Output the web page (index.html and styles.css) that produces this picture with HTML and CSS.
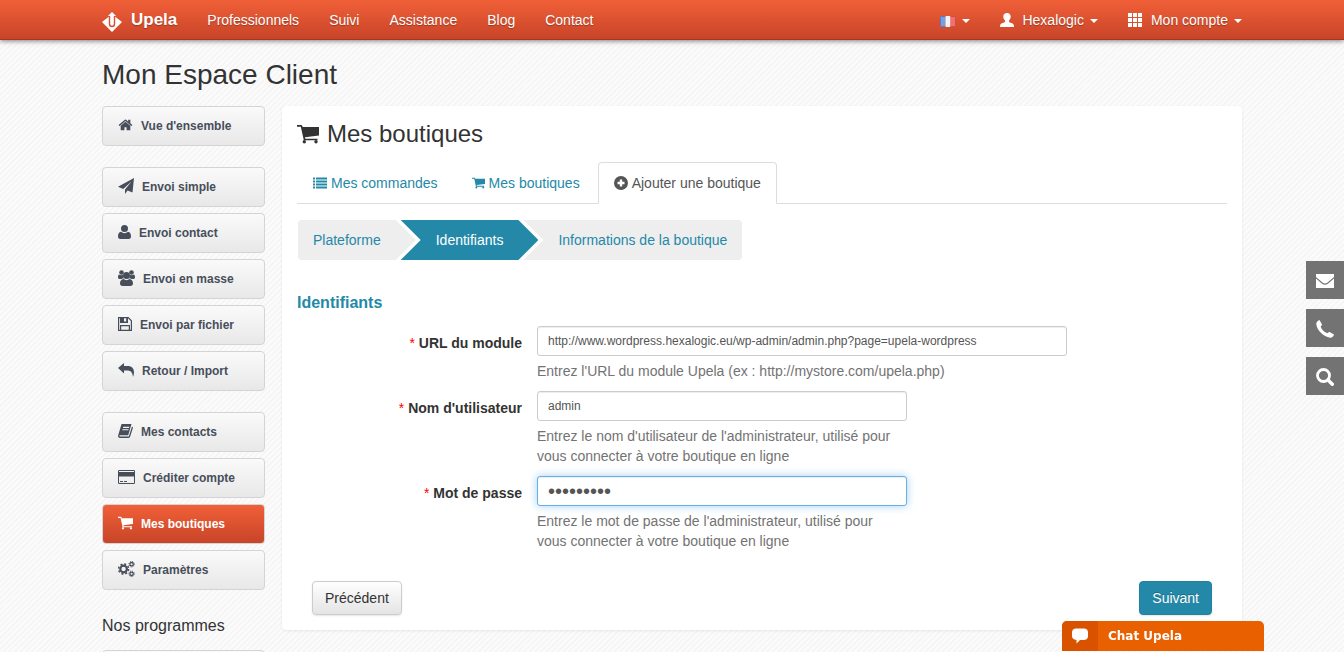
FILE: index.html
```html
<!DOCTYPE html>
<html lang="fr">
<head>
<meta charset="utf-8">
<meta name="viewport" content="width=device-width, initial-scale=1">
<title>Upela - Mes boutiques</title>
<link rel="stylesheet" href="styles.css">
</head>
<body>
<svg class="sprite" aria-hidden="true">
  <symbol id="cart" viewBox="0 0 22 20"><path d="M0 1h4.600l1.200 2H22v8.500L8 13.200l.3 1.600H20.500V16.200H6.800L3.800 2.800H0z"/><circle cx="7.300" cy="17.800" r="1.700"/><circle cx="19" cy="17.800" r="1.700"/></symbol>
  <symbol id="home" viewBox="0 0 1792 1792"><path d="M1472 992v480q0 26-19 45t-45 19h-384v-384h-256v384h-384q-26 0-45-19t-19-45v-480q0-1 .5-3t.5-3l575-474 575 474q1 2 1 6zm223-69l-62 74q-8 9-21 11h-3q-13 0-21-7l-692-577-692 577q-12 8-24 7-13-2-21-11l-62-74q-8-10-7-23.500t11-21.500l719-599q32-26 76-26t76 26l244 204v-195q0-14 9-23t23-9h192q14 0 23 9t9 23v408l219 182q10 8 11 21.500t-7 23.500z"/></symbol>
  <symbol id="plane" viewBox="0 0 16 16"><path d="M16 0l-1.500 14.500-5-2L7 16v-4.500L13.500 3.500 5.200 11 0 8.800z"/></symbol>
  <symbol id="user" viewBox="0 0 13 14"><circle cx="6.500" cy="3.500" r="3.500"/><path d="M3 6.800C.8 7 0 9 0 11.500 0 13 .8 14 2.200 14h8.600c1.400 0 2.200-1 2.200-2.500C13 9 12.200 7 10 6.800 8 8.700 5 8.700 3 6.800z"/></symbol>
  <symbol id="users" viewBox="0 0 17 16"><circle cx="3.500" cy="2.500" r="2.300"/><circle cx="13.500" cy="2.500" r="2.300"/><circle cx="8.500" cy="5.500" r="3.500"/><path d="M1 4.500c1.500 1 3 1 4 .3-.2 1.500.2 2.700 1 3.500C5 8.300 4 8.500 3.300 9H1.500C.3 9 0 8 0 7c0-1 .3-2.200 1-2.500zM16 4.500c-1.500 1-3 1-4 .3.200 1.500-.2 2.700-1 3.500 1 0 2 .2 2.700.7h1.800c1.200 0 1.500-1 1.500-2 0-1-.3-2.200-1-2.500zM5.500 9C3.200 9.500 2 11 2 13.500 2 15 3 16 4.500 16h8c1.500 0 2.500-1 2.500-2.500 0-2.500-1.200-4-3.500-4.500-1.800 1.500-4.200 1.500-6 0z"/></symbol>
  <symbol id="disk" viewBox="0 0 14 14"><path fill-rule="evenodd" d="M0 0h10.500L14 3.500V14H0zm1.200 1.200v11.600H2V8h10v4.800h.8V4L10 1.200V6H2V1.200zM6 1.200v3.300h2.200V1.200zM3.200 9.200v3.600h7.600V9.200z"/></symbol>
  <symbol id="reply" viewBox="0 0 16 14"><path d="M0 5l6-5v3h3.500C14 3 16 5.500 16 9.500c0 1.500-.4 3-1 4.500C14.500 9.500 13 7.500 9 7.500H6v3z"/></symbol>
  <symbol id="book" viewBox="0 0 15 14"><path fill-rule="evenodd" d="M4 0h9.500L10.200 11.200H1.800c-1 .3-.4 1.300.4 1.300h8.600L14 2.500c1 .3 1 1 .8 1.700l-2.700 8.600c-.2.700-.8 1.200-1.600 1.200H2C.7 14-.4 12.600.2 11.200L3.200 1C3.300.500 3.500.1 4 0zm1.300 2.800L5 3.900h6l.3-1.100zM4.600 5.200l-.3 1.100h6l.3-1.100z"/></symbol>
  <symbol id="card" viewBox="0 0 17 14"><path fill-rule="evenodd" d="M1.200 0h14.600Q17 0 17 1.200v11.600q0 1.200-1.200 1.200H1.200Q0 14 0 12.800V1.200Q0 0 1.200 0zM1 1v1h15V1zm0 5.500V13h15V6.500zM2 11h3v1H2zm4 0h3v1H6z"/></symbol>
  <symbol id="cogs" viewBox="0 0 17 16"><g fill="none" stroke="currentColor"><circle cx="5.600" cy="8" r="3.300" stroke-width="2.200"/><circle cx="5.600" cy="8" r="5" stroke-width="1.500" stroke-dasharray="2 1.930"/><circle cx="13.600" cy="3.200" r="1.700" stroke-width="1.300"/><circle cx="13.600" cy="3.200" r="2.700" stroke-width="1" stroke-dasharray="1.100 1.020"/><circle cx="13.600" cy="12.800" r="1.700" stroke-width="1.300"/><circle cx="13.600" cy="12.800" r="2.700" stroke-width="1" stroke-dasharray="1.100 1.020"/></g></symbol>
  <symbol id="list" viewBox="0 0 14 11"><path d="M0 0h2v2H0zM3 0h11v2H3zM0 3h2v2H0zM3 3h11v2H3zM0 6h2v2H0zM3 6h11v2H3zM0 9h2v2H0zM3 9h11v2H3z"/></symbol>
  <symbol id="plus" viewBox="0 0 14 14"><path fill-rule="evenodd" d="M7 0a7 7 0 110 14A7 7 0 017 0zM5.800 3.500v2.300H3.500v2.400h2.300v2.300h2.400V8.200h2.300V5.800H8.200V3.500z"/></symbol>
  <symbol id="person" viewBox="0 0 14 14"><path d="M7 0c2.200 0 3.700 1.400 3.700 3.600 0 1.700-.7 3-1.700 4v1.200c.4 1 3 1.200 4.200 2.200.6.600.8 1.600.8 3H0c0-1.400.2-2.400.8-3C2 10 4.600 9.800 5 8.800V7.600c-1-1-1.700-2.300-1.700-4C3.300 1.400 4.800 0 7 0z"/></symbol>
  <symbol id="grid" viewBox="0 0 14 14"><path d="M0 0h4v4H0zM5 0h4v4H5zM10 0h4v4h-4zM0 5h4v4H0zM5 5h4v4H5zM10 5h4v4h-4zM0 10h4v4H0zM5 10h4v4H5zM10 10h4v4h-4z"/></symbol>
  <symbol id="mail" viewBox="0 0 18 14"><path d="M0 0h18v3L11.500 8.600q-2.500 2-5 0L0 3zM0 4.500l5.800 5.100q3.200 2.400 6.400 0L18 4.500V14H0z"/></symbol>
  <symbol id="phone" viewBox="0 0 18 18"><path d="M3.500 0L6 4.500c.2 1-.9 1.300-1.300 2.200C5.500 9.500 8.500 12.300 11.400 13.200c.8-.5 1.200-1.400 2.200-1.200l4.400 2.500c-.3 2-2 3.300-4 3.200C7.500 16.500 1.500 11 .300 4.500 0 2.700 1.500.600 3.500 0z"/></symbol>
  <symbol id="search" viewBox="0 0 18 18"><g fill="none" stroke="currentColor"><circle cx="7.500" cy="7.500" r="6" stroke-width="2.800"/><path d="M12 12l4.300 4.300" stroke-width="3.400" stroke-linecap="round"/></g></symbol>
  <symbol id="bubble" viewBox="0 0 16 15"><path d="M3.500 0h9Q16 .5 16 4v3.500Q16 11 12.500 11.500H8L4.500 15v-3.500Q0 11 0 7.500V4Q0 .5 3.500 0z"/></symbol>
</svg>

<header class="navbar">
  <div class="container navbar-inner">
    <a class="brand" href="#">
      <svg class="brand-logo" viewBox="0 0 20 20"><path d="M10 0l4 4h-2.200v8a1.800 1.800 0 01-3.600 0V4H6zM6.800 4.800v7.200a3.200 3.200 0 006.400 0V4.800L20 10 10 20 0 10z"/></svg>
      <span>Upela</span>
    </a>
    <nav class="nav-links">
      <a href="#">Professionnels</a>
      <a href="#">Suivi</a>
      <a href="#">Assistance</a>
      <a href="#">Blog</a>
      <a href="#">Contact</a>
    </nav>
    <nav class="nav-links nav-account">
      <a href="#" aria-label="Langue"><svg class="flag" viewBox="0 0 16 11"><path fill="#7d9ddb" d="M0 0h5.500v11H0z"/><path fill="#f4f4f4" d="M5.500 0h5v11h-5z"/><path fill="#f0706c" d="M10.500 0H16v11h-5.500z"/><path fill="none" stroke="#4a62b8" stroke-opacity=".6" d="M5.500.5h-5v10h5"/><path fill="none" stroke="#c03030" stroke-opacity=".6" d="M10.500.5h5v10h-5"/></svg><span class="caret"></span></a>
      <a href="#"><svg class="icon person"><use href="#person"/></svg>Hexalogic<span class="caret"></span></a>
      <a href="#"><svg class="icon apps"><use href="#grid"/></svg>Mon compte<span class="caret"></span></a>
    </nav>
  </div>
</header>

<div class="container">
  <h1 class="page-title">Mon Espace Client</h1>
  <div class="layout">
    <aside class="sidebar">
      <nav class="menu">
        <a class="menu-item" href="#"><svg class="icon s15"><use href="#home"/></svg>Vue d'ensemble</a>
      </nav>
      <nav class="menu">
        <a class="menu-item" href="#"><svg class="icon s16"><use href="#plane"/></svg>Envoi simple</a>
        <a class="menu-item" href="#"><svg class="icon s13"><use href="#user"/></svg>Envoi contact</a>
        <a class="menu-item" href="#"><svg class="icon s17"><use href="#users"/></svg>Envoi en masse</a>
        <a class="menu-item" href="#"><svg class="icon s14"><use href="#disk"/></svg>Envoi par fichier</a>
        <a class="menu-item" href="#"><svg class="icon s16"><use href="#reply"/></svg>Retour / Import</a>
      </nav>
      <nav class="menu">
        <a class="menu-item" href="#"><svg class="icon s15"><use href="#book"/></svg>Mes contacts</a>
        <a class="menu-item" href="#"><svg class="icon s17"><use href="#card"/></svg>Créditer compte</a>
        <a class="menu-item active" href="#"><svg class="icon s15"><use href="#cart"/></svg>Mes boutiques</a>
        <a class="menu-item" href="#"><svg class="icon s17"><use href="#cogs"/></svg>Paramètres</a>
      </nav>
      <h2 class="sidebar-title">Nos programmes</h2>
      <nav class="menu">
        <a class="menu-item" href="#" aria-label="Programme"></a>
      </nav>
    </aside>

    <main class="card">
      <h2 class="card-title"><svg class="icon title-cart"><use href="#cart"/></svg>Mes boutiques</h2>
      <nav class="tabs">
        <a class="tab" href="#"><svg class="icon s14"><use href="#list"/></svg>Mes commandes</a>
        <a class="tab" href="#"><svg class="icon s13"><use href="#cart"/></svg>Mes boutiques</a>
        <a class="tab current" href="#"><svg class="icon s14"><use href="#plus"/></svg>Ajouter une boutique</a>
      </nav>
      <nav class="steps">
        <a class="step first" href="#">Plateforme</a>
        <a class="step current" href="#">Identifiants</a>
        <a class="step last" href="#">Informations de la boutique</a>
      </nav>
      <form>
        <h3 class="form-title">Identifiants</h3>
        <div class="field">
          <label for="url"><span class="required">*</span> URL du module</label>
          <div class="control wide">
            <input id="url" type="text" value="http://www.wordpress.hexalogic.eu/wp-admin/admin.php?page=upela-wordpress">
            <p class="help">Entrez l'URL du module Upela (ex : http://mystore.com/upela.php)</p>
          </div>
        </div>
        <div class="field">
          <label for="login"><span class="required">*</span> Nom d'utilisateur</label>
          <div class="control">
            <input id="login" type="text" value="admin">
            <p class="help">Entrez le nom d'utilisateur de l'administrateur, utilisé pour vous connecter à votre boutique en ligne</p>
          </div>
        </div>
        <div class="field">
          <label for="password"><span class="required">*</span> Mot de passe</label>
          <div class="control">
            <input id="password" class="focused" type="password" value="wordpress">
            <p class="help">Entrez le mot de passe de l'administrateur, utilisé pour vous connecter à votre boutique en ligne</p>
          </div>
        </div>
        <div class="actions">
          <button class="btn" type="button">Précédent</button>
          <button class="btn primary" type="submit">Suivant</button>
        </div>
      </form>
    </main>
  </div>
</div>

<aside class="quick">
  <a href="#" aria-label="Email"><svg class="icon s18"><use href="#mail"/></svg></a>
  <a href="#" aria-label="Téléphone"><svg class="icon s18"><use href="#phone"/></svg></a>
  <a href="#" aria-label="Recherche"><svg class="icon s18"><use href="#search"/></svg></a>
</aside>
<button class="chat" type="button"><span class="chat-icon"><svg class="icon s16"><use href="#bubble"/></svg></span><span class="chat-label">Chat Upela</span></button>
</body>
</html>
```
FILE: styles.css
```css
*, *::before, *::after { box-sizing: border-box; }

html { scrollbar-width: none; }

body {
  margin: 0;
  height: 100vh;
  overflow: hidden;
  background: repeating-linear-gradient(135deg, #fbfbfb 0, #fbfbfb 2px, #f4f4f4 3px, #f6f6f6 4px);
  color: #333;
  font: 14px/20px "Liberation Sans", Arial, sans-serif;
}

a { text-decoration: none; }
h1, h2, h3, p { margin: 0; font-weight: normal; }

.sprite { display: none; }
.icon { flex: none; width: 16px; height: 16px; fill: currentColor; }
.s13 { width: 13px; }
.s14 { width: 14px; }
.s15 { width: 15px; }
.s16 { width: 16px; }
.s17 { width: 17px; }
.s18 { width: 18px; height: 18px; }

.container { max-width: 1140px; margin: 0 auto; }

/* Top bar */
.navbar {
  height: 40px;
  background: linear-gradient(#f06038, #c84428);
  border-bottom: 1px solid #a8371f;
  box-shadow: 0 1px 5px rgba(0, 0, 0, .5);
}
.navbar-inner { display: flex; align-items: center; height: 40px; }
.brand {
  display: flex;
  align-items: center;
  gap: 9px;
  margin-right: 15px;
  color: #fff;
  font-size: 17px;
  font-weight: bold;
  line-height: 22px;
  text-shadow: 0 1px 1px rgba(0, 0, 0, .3);
}
.brand-logo { width: 20px; height: 20px; margin-top: 4px; fill: #fff; }
.nav-links { display: flex; }
.nav-links a {
  display: flex;
  align-items: center;
  padding: 10px 15px;
  color: #fff;
  text-shadow: 0 1px 1px rgba(0, 0, 0, .3);
}
.nav-account { margin-left: auto; margin-right: -15px; }
.caret {
  margin: 2px 0 0 6px;
  border: 4px solid transparent;
  border-top-color: #fff;
  border-bottom: 0;
}
.flag { width: 16px; height: 11px; margin-top: 2px; }
.person { width: 14px; margin-right: 8px; }
.apps { width: 14px; height: 14px; margin-right: 9px; }

/* Page */
.page-title { padding: 15px 0 11px; font-size: 28px; line-height: 40px; }
.layout { display: flex; align-items: flex-start; gap: 17px; }

/* Side menu */
.sidebar { flex: none; width: 163px; }
.menu { display: flex; flex-direction: column; gap: 6px; margin-bottom: 21px; }
.menu-item {
  display: flex;
  align-items: center;
  gap: 8px;
  height: 40px;
  padding: 0 15px;
  border: 1px solid #d4d4d4;
  border-radius: 4px;
  background: linear-gradient(#fafafa, #e8e8e8);
  color: #474e5a;
  font-size: 12px;
  font-weight: bold;
}
.menu-item.active { background: linear-gradient(#f06038, #c84428); color: #fff; }
.menu-item .icon { margin-bottom: 2px; }
.sidebar-title { padding-top: 3px; margin-bottom: 12px; font-size: 16px; line-height: 24px; }

/* Card */
.card {
  flex: 1;
  min-width: 0;
  padding: 15px;
  border-radius: 4px;
  background: #fff;
  box-shadow: 0 1px 3px rgba(0, 0, 0, .08);
}
.card-title {
  display: flex;
  align-items: center;
  gap: 8px;
  margin-bottom: 15px;
  font-size: 24px;
  line-height: 26px;
}
.title-cart { width: 22px; height: 20px; }

.tabs { display: flex; gap: 2px; border-bottom: 1px solid #ddd; }
.tab {
  display: flex;
  align-items: center;
  gap: 4px;
  margin-bottom: -1px;
  padding: 10px 15px;
  border: 1px solid transparent;
  border-radius: 4px 4px 0 0;
  color: #2489a8;
}
.tab.current { border-color: #ddd #ddd #fff; background: #fff; color: #555; }

.steps { display: flex; margin: 16px 1px 30px; }
.step {
  padding: 10px 35px;
  background: #eee;
  color: #2489a8;
}
.step.first {
  padding-left: 15px;
  border-radius: 4px 0 0 4px;
  clip-path: polygon(0 0, calc(100% - 20px) 0, 100% 50%, calc(100% - 20px) 100%, 0 100%);
}
.step.current {
  margin: 0 -15px;
  background: #2489a8;
  color: #fff;
  clip-path: polygon(0 0, calc(100% - 20px) 0, 100% 50%, calc(100% - 20px) 100%, 0 100%, 20px 50%);
}
.step.last {
  padding-right: 15px;
  border-radius: 0 4px 4px 0;
  clip-path: polygon(0 0, 100% 0, 100% 100%, 0 100%, 20px 50%);
}

/* Form */
.form-title {
  margin-bottom: 10px;
  color: #2489a8;
  font-size: 16px;
  font-weight: bold;
  line-height: 26px;
}
.field { display: grid; grid-template-columns: 225px 1fr; gap: 15px; margin-bottom: 10px; }
.field label { padding-top: 7px; font-weight: bold; text-align: right; }
.required { color: #f00; font-weight: normal; }
.control { max-width: 370px; }
.control.wide { max-width: 530px; }
.control input {
  display: block;
  width: 100%;
  height: 30px;
  padding: 5px 10px;
  border: 1px solid #ccc;
  border-radius: 3px;
  background: #fff;
  box-shadow: inset 0 1px 1px rgba(0, 0, 0, .075);
  color: #555;
  font: 12px/18px "Liberation Sans", Arial, sans-serif;
}
.control input[type="password"] { font-size: 20px; }
.control input.focused {
  border-color: #66afe9;
  box-shadow: inset 0 1px 1px rgba(0, 0, 0, .075), 0 0 8px rgba(102, 175, 233, .6);
}
.help { margin-top: 5px; padding-right: 5px; color: #737373; }

.actions { display: flex; justify-content: space-between; padding: 20px 15px 0; }
.btn {
  height: 34px;
  padding: 0 12px;
  border: 1px solid #ccc;
  border-radius: 4px;
  background: linear-gradient(#fff, #e4e4e4);
  box-shadow: 0 1px 2px rgba(0, 0, 0, .1);
  color: #333;
  font: 14px/20px "Liberation Sans", Arial, sans-serif;
}
.btn.primary {
  border-color: #2082a0;
  background: #2489a8;
  color: #fff;
  text-shadow: 0 -1px 0 rgba(0, 0, 0, .25);
}

/* Floating tools */
.quick {
  position: fixed;
  top: 261px;
  right: 0;
  display: grid;
  gap: 10px;
}
.quick a {
  display: grid;
  place-items: center;
  width: 38px;
  height: 38px;
  padding-top: 2px;
  background: #737373;
  color: #fff;
}
.chat {
  position: fixed;
  right: 80px;
  bottom: 1px;
  display: flex;
  width: 202px;
  height: 30px;
  padding: 0;
  overflow: hidden;
  border: 0;
  border-radius: 5px 5px 0 0;
  background: #e86000;
  color: #fff;
  font: bold 12px/30px "DejaVu Sans", Verdana, sans-serif;
}
.chat-icon { display: grid; place-items: center; width: 36px; height: 30px; background: #d85200; }
.chat-label { padding-left: 10px; }
```
